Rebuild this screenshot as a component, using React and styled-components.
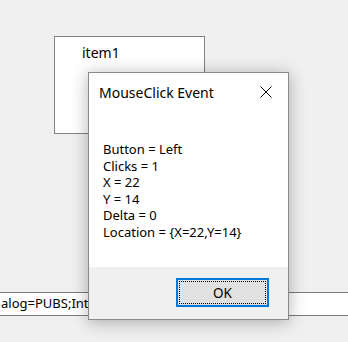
import styled, { createGlobalStyle } from "styled-components";

const GlobalStyle = createGlobalStyle`
  body {
    margin: 0;
    background: #f0f0f0;
    overflow: hidden;
    font-family: "Noto Sans", "Open Sans", sans-serif;
  }
`;

export default function App() {
  const lines = [
    "Button = Left",
    "Clicks = 1",
    "X = 22",
    "Y = 14",
    "Delta = 0",
    "Location = {X=22,Y=14}",
  ];

  return (
    <>
      <GlobalStyle />
      <SCForm>
        <SCListBox>
          <SCItem>item1</SCItem>
        </SCListBox>

        <SCTextBox>alog=PUBS;Integrated</SCTextBox>

        <SCDialog>
          <SCTitleBar>
            <SCTitle>MouseClick Event</SCTitle>
            <svg width="12" height="12" viewBox="0 0 12 12">
              <path d="M0.5 0.5 L11.5 11.5 M11.5 0.5 L0.5 11.5" stroke="#000" strokeWidth="1" fill="none" />
            </svg>
          </SCTitleBar>

          <SCBody>
            {lines.map((l) => (
              <SCLine key={l}>{l}</SCLine>
            ))}
          </SCBody>

          <SCFooter>
            <SCButton>OK</SCButton>
          </SCFooter>
        </SCDialog>
      </SCForm>
    </>
  );
}

const SCForm = styled.div`
  position: relative;
  width: 348px;
  height: 342px;
  padding-top: 36px;
  box-sizing: border-box;
  overflow: hidden;
`;

const SCListBox = styled.div`
  margin-left: 54px;
  width: 151px;
  height: 98px;
  box-sizing: border-box;
  border: 1px solid #828282;
  background: #fff;
  padding: 6px 0 0 27px;
`;

const SCItem = styled.div`
  font-size: 14px;
  color: #000;
`;

const SCTextBox = styled.div`
  margin-top: 158px;
  margin-left: -10px;
  width: 400px;
  height: 24px;
  box-sizing: border-box;
  border: 1px solid #7a7a7a;
  background: #fff;
  padding-left: 10px;
  font-size: 13px;
  line-height: 21px;
  white-space: nowrap;
  overflow: hidden;
  color: #000;
`;

const SCDialog = styled.div`
  position: absolute;
  left: 88px;
  top: 72px;
  width: 201px;
  height: 248px;
  box-sizing: border-box;
  border: 1px solid #8a8a8a;
  background: #fff;
  box-shadow: 0 2px 16px rgba(0, 0, 0, 0.3);
  display: flex;
  flex-direction: column;
`;

const SCTitleBar = styled.div`
  height: 38px;
  display: flex;
  align-items: center;
  justify-content: space-between;
  padding: 0 16px 0 10px;
`;

const SCTitle = styled.span`
  font-size: 14px;
  color: #000;
`;

const SCBody = styled.div`
  flex: 1;
  padding: 30px 0 0 14px;
`;

const SCLine = styled.div`
  font-size: 13px;
  line-height: 16.5px;
  color: #000;
`;

const SCFooter = styled.div`
  height: 52px;
  background: #f0f0f0;
  display: flex;
  justify-content: flex-end;
  align-items: flex-start;
  padding: 11px 19px 0 0;
  box-sizing: border-box;
`;

const SCButton = styled.button`
  width: 93px;
  height: 29px;
  border: 2px solid #0078d7;
  background: #e1e1e1;
  outline: 1px dotted #000;
  outline-offset: -4px;
  font-family: "Noto Sans", "Open Sans", sans-serif;
  font-size: 13.5px;
  color: #000;
  padding: 0;
`;
